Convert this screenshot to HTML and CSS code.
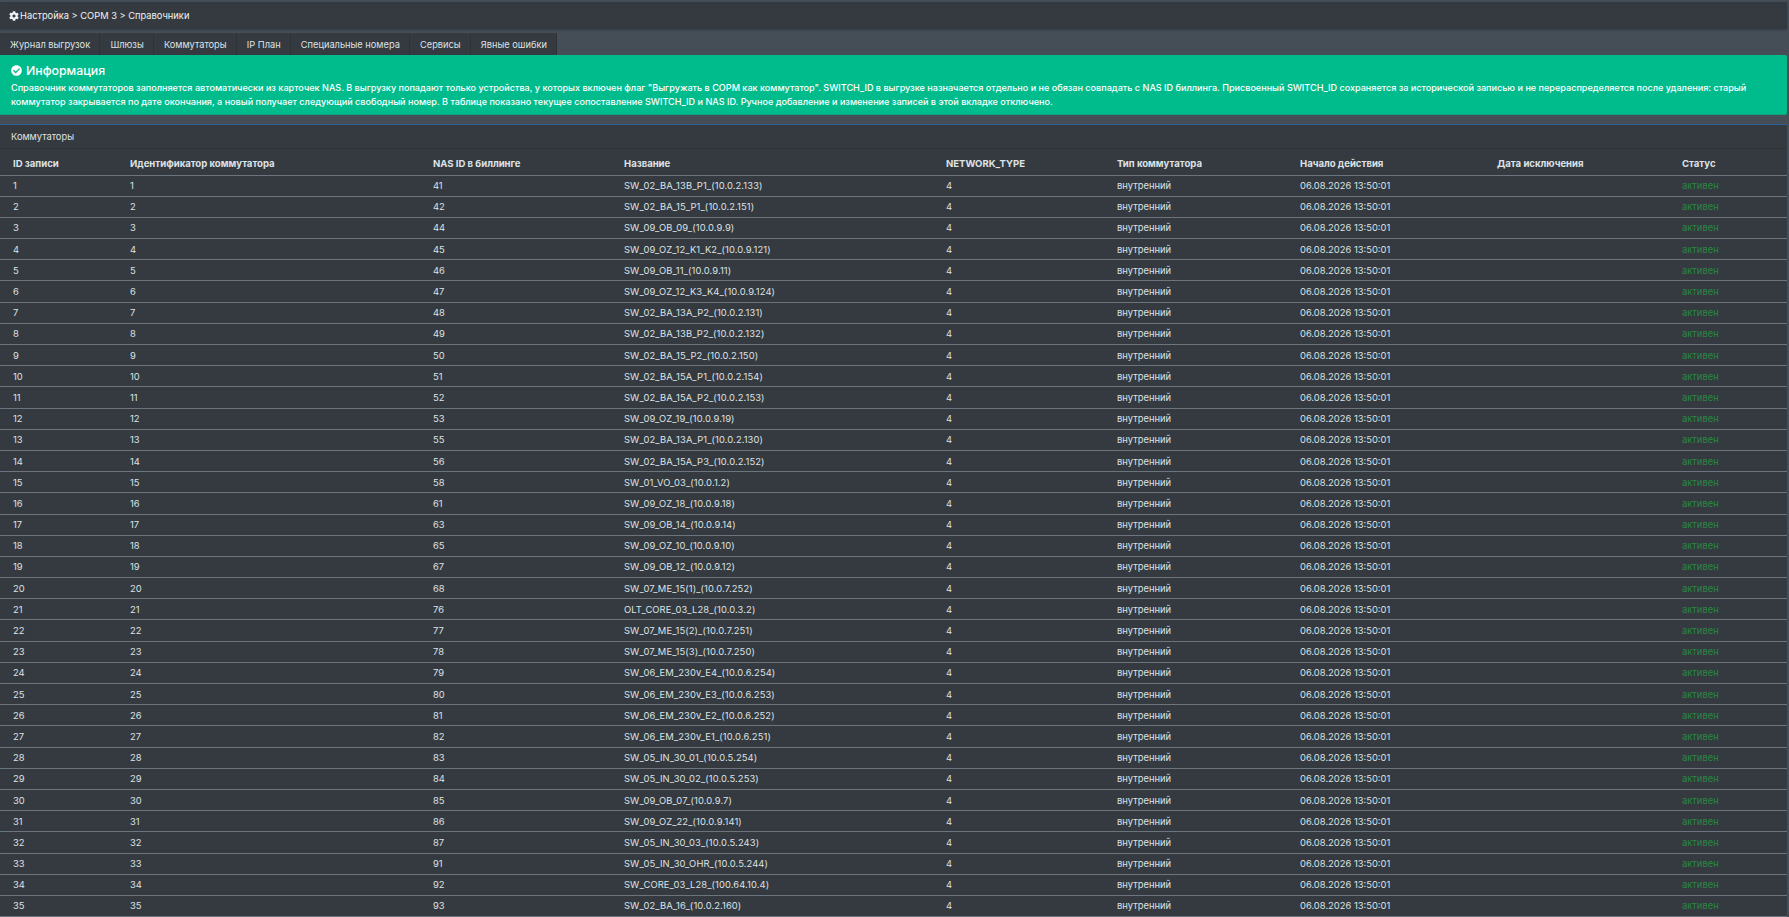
FILE: index.html
```html
<!DOCTYPE html>
<html>
<head>
  <title>Справочники</title>
  <meta name="viewport" content="width=device-width, initial-scale=1">
  <link rel="stylesheet" href="styles.css">
</head>
<body>
  <div class="crumbs">
    <svg class="ico-cog" viewBox="0 0 512 512"><path d="M487.4 315.7l-42.6-24.6c4.3-23.2 4.3-47 0-70.2l42.6-24.6c4.9-2.8 7.1-8.6 5.5-14-11.1-35.6-30-67.8-54.7-94.6-3.8-4.1-10-5.1-14.8-2.3L380.8 110c-17.9-15.4-38.5-27.3-60.8-35.1V25.8c0-5.6-3.9-10.5-9.4-11.7-36.7-8.2-74.3-7.8-109.2 0-5.5 1.2-9.4 6.1-9.4 11.7V75c-22.2 7.9-42.8 19.8-60.8 35.1L88.7 85.5c-4.9-2.8-11-1.9-14.8 2.3-24.7 26.7-43.6 58.9-54.7 94.6-1.7 5.4.6 11.2 5.5 14L67.3 221c-4.3 23.2-4.3 47 0 70.2l-42.6 24.6c-4.9 2.8-7.1 8.6-5.5 14 11.1 35.6 30 67.8 54.7 94.6 3.8 4.1 10 5.1 14.8 2.3l42.6-24.6c17.9 15.4 38.5 27.3 60.8 35.1v49.2c0 5.6 3.9 10.5 9.4 11.7 36.7 8.2 74.3 7.8 109.2 0 5.5-1.2 9.4-6.1 9.4-11.7v-49.2c22.2-7.9 42.8-19.8 60.8-35.1l42.6 24.6c4.9 2.8 11 1.9 14.8-2.3 24.7-26.7 43.6-58.9 54.7-94.6 1.5-5.5-.7-11.3-5.6-14.1zM256 336c-44.1 0-80-35.9-80-80s35.9-80 80-80 80 35.9 80 80-35.9 80-80 80z"/></svg>
    <span>Настройка &gt; СОРМ 3 &gt; Справочники</span>
  </div>

  <ul class="tabs">
    <li>Журнал выгрузок</li>
    <li>Шлюзы</li>
    <li>Коммутаторы</li>
    <li>IP План</li>
    <li>Специальные номера</li>
    <li>Сервисы</li>
    <li>Явные ошибки</li>
  </ul>

  <div class="alert">
    <h5>
      <svg class="ico-check" viewBox="0 0 512 512"><path d="M504 256c0 136.967-111.033 248-248 248S8 392.967 8 256 119.033 8 256 8s248 111.033 248 248zM227.314 387.314l184-184c6.248-6.248 6.248-16.379 0-22.627l-22.627-22.627c-6.248-6.249-16.379-6.249-22.628 0L216 308.118l-70.059-70.059c-6.248-6.248-16.379-6.248-22.628 0l-22.627 22.627c-6.248 6.248-6.248 16.379 0 22.627l104 104c6.249 6.25 16.379 6.25 22.628.001z"/></svg>
      Информация
    </h5>
    <p>Справочник коммутаторов заполняется автоматически из карточек NAS. В выгрузку попадают только устройства, у которых включен флаг "Выгружать в СОРМ как коммутатор". SWITCH_ID в выгрузке назначается отдельно и не обязан совпадать с NAS ID биллинга. Присвоенный SWITCH_ID сохраняется за исторической записью и не перераспределяется после удаления: старый коммутатор закрывается по дате окончания, а новый получает следующий свободный номер. В таблице показано текущее сопоставление SWITCH_ID и NAS ID. Ручное добавление и изменение записей в этой вкладке отключено.</p>
  </div>

  <div class="card">
    <div class="card-header">Коммутаторы</div>
    <table>
      <colgroup>
        <col class="c-id"><col class="c-switch"><col class="c-nas"><col class="c-name"><col class="c-net"><col class="c-type"><col class="c-start"><col class="c-end"><col class="c-status">
      </colgroup>
      <thead>
        <tr><th>ID записи</th><th>Идентификатор коммутатора</th><th>NAS ID в биллинге</th><th>Название</th><th>NETWORK_TYPE</th><th>Тип коммутатора</th><th>Начало действия</th><th>Дата исключения</th><th>Статус</th></tr>
      </thead>
      <tbody>
        <tr><td>1</td><td>1</td><td>41</td><td>SW_02_BA_13B_P1_(10.0.2.133)</td><td>4</td><td>внутренний</td><td>06.08.2026 13:50:01</td><td></td><td class="active">активен</td></tr>
        <tr><td>2</td><td>2</td><td>42</td><td>SW_02_BA_15_P1_(10.0.2.151)</td><td>4</td><td>внутренний</td><td>06.08.2026 13:50:01</td><td></td><td class="active">активен</td></tr>
        <tr><td>3</td><td>3</td><td>44</td><td>SW_09_OB_09_(10.0.9.9)</td><td>4</td><td>внутренний</td><td>06.08.2026 13:50:01</td><td></td><td class="active">активен</td></tr>
        <tr><td>4</td><td>4</td><td>45</td><td>SW_09_OZ_12_K1_K2_(10.0.9.121)</td><td>4</td><td>внутренний</td><td>06.08.2026 13:50:01</td><td></td><td class="active">активен</td></tr>
        <tr><td>5</td><td>5</td><td>46</td><td>SW_09_OB_11_(10.0.9.11)</td><td>4</td><td>внутренний</td><td>06.08.2026 13:50:01</td><td></td><td class="active">активен</td></tr>
        <tr><td>6</td><td>6</td><td>47</td><td>SW_09_OZ_12_K3_K4_(10.0.9.124)</td><td>4</td><td>внутренний</td><td>06.08.2026 13:50:01</td><td></td><td class="active">активен</td></tr>
        <tr><td>7</td><td>7</td><td>48</td><td>SW_02_BA_13A_P2_(10.0.2.131)</td><td>4</td><td>внутренний</td><td>06.08.2026 13:50:01</td><td></td><td class="active">активен</td></tr>
        <tr><td>8</td><td>8</td><td>49</td><td>SW_02_BA_13B_P2_(10.0.2.132)</td><td>4</td><td>внутренний</td><td>06.08.2026 13:50:01</td><td></td><td class="active">активен</td></tr>
        <tr><td>9</td><td>9</td><td>50</td><td>SW_02_BA_15_P2_(10.0.2.150)</td><td>4</td><td>внутренний</td><td>06.08.2026 13:50:01</td><td></td><td class="active">активен</td></tr>
        <tr><td>10</td><td>10</td><td>51</td><td>SW_02_BA_15A_P1_(10.0.2.154)</td><td>4</td><td>внутренний</td><td>06.08.2026 13:50:01</td><td></td><td class="active">активен</td></tr>
        <tr><td>11</td><td>11</td><td>52</td><td>SW_02_BA_15A_P2_(10.0.2.153)</td><td>4</td><td>внутренний</td><td>06.08.2026 13:50:01</td><td></td><td class="active">активен</td></tr>
        <tr><td>12</td><td>12</td><td>53</td><td>SW_09_OZ_19_(10.0.9.19)</td><td>4</td><td>внутренний</td><td>06.08.2026 13:50:01</td><td></td><td class="active">активен</td></tr>
        <tr><td>13</td><td>13</td><td>55</td><td>SW_02_BA_13A_P1_(10.0.2.130)</td><td>4</td><td>внутренний</td><td>06.08.2026 13:50:01</td><td></td><td class="active">активен</td></tr>
        <tr><td>14</td><td>14</td><td>56</td><td>SW_02_BA_15A_P3_(10.0.2.152)</td><td>4</td><td>внутренний</td><td>06.08.2026 13:50:01</td><td></td><td class="active">активен</td></tr>
        <tr><td>15</td><td>15</td><td>58</td><td>SW_01_VO_03_(10.0.1.2)</td><td>4</td><td>внутренний</td><td>06.08.2026 13:50:01</td><td></td><td class="active">активен</td></tr>
        <tr><td>16</td><td>16</td><td>61</td><td>SW_09_OZ_18_(10.0.9.18)</td><td>4</td><td>внутренний</td><td>06.08.2026 13:50:01</td><td></td><td class="active">активен</td></tr>
        <tr><td>17</td><td>17</td><td>63</td><td>SW_09_OB_14_(10.0.9.14)</td><td>4</td><td>внутренний</td><td>06.08.2026 13:50:01</td><td></td><td class="active">активен</td></tr>
        <tr><td>18</td><td>18</td><td>65</td><td>SW_09_OZ_10_(10.0.9.10)</td><td>4</td><td>внутренний</td><td>06.08.2026 13:50:01</td><td></td><td class="active">активен</td></tr>
        <tr><td>19</td><td>19</td><td>67</td><td>SW_09_OB_12_(10.0.9.12)</td><td>4</td><td>внутренний</td><td>06.08.2026 13:50:01</td><td></td><td class="active">активен</td></tr>
        <tr><td>20</td><td>20</td><td>68</td><td>SW_07_ME_15(1)_(10.0.7.252)</td><td>4</td><td>внутренний</td><td>06.08.2026 13:50:01</td><td></td><td class="active">активен</td></tr>
        <tr><td>21</td><td>21</td><td>76</td><td>OLT_CORE_03_L28_(10.0.3.2)</td><td>4</td><td>внутренний</td><td>06.08.2026 13:50:01</td><td></td><td class="active">активен</td></tr>
        <tr><td>22</td><td>22</td><td>77</td><td>SW_07_ME_15(2)_(10.0.7.251)</td><td>4</td><td>внутренний</td><td>06.08.2026 13:50:01</td><td></td><td class="active">активен</td></tr>
        <tr><td>23</td><td>23</td><td>78</td><td>SW_07_ME_15(3)_(10.0.7.250)</td><td>4</td><td>внутренний</td><td>06.08.2026 13:50:01</td><td></td><td class="active">активен</td></tr>
        <tr><td>24</td><td>24</td><td>79</td><td>SW_06_EM_230v_E4_(10.0.6.254)</td><td>4</td><td>внутренний</td><td>06.08.2026 13:50:01</td><td></td><td class="active">активен</td></tr>
        <tr><td>25</td><td>25</td><td>80</td><td>SW_06_EM_230v_E3_(10.0.6.253)</td><td>4</td><td>внутренний</td><td>06.08.2026 13:50:01</td><td></td><td class="active">активен</td></tr>
        <tr><td>26</td><td>26</td><td>81</td><td>SW_06_EM_230v_E2_(10.0.6.252)</td><td>4</td><td>внутренний</td><td>06.08.2026 13:50:01</td><td></td><td class="active">активен</td></tr>
        <tr><td>27</td><td>27</td><td>82</td><td>SW_06_EM_230v_E1_(10.0.6.251)</td><td>4</td><td>внутренний</td><td>06.08.2026 13:50:01</td><td></td><td class="active">активен</td></tr>
        <tr><td>28</td><td>28</td><td>83</td><td>SW_05_IN_30_01_(10.0.5.254)</td><td>4</td><td>внутренний</td><td>06.08.2026 13:50:01</td><td></td><td class="active">активен</td></tr>
        <tr><td>29</td><td>29</td><td>84</td><td>SW_05_IN_30_02_(10.0.5.253)</td><td>4</td><td>внутренний</td><td>06.08.2026 13:50:01</td><td></td><td class="active">активен</td></tr>
        <tr><td>30</td><td>30</td><td>85</td><td>SW_09_OB_07_(10.0.9.7)</td><td>4</td><td>внутренний</td><td>06.08.2026 13:50:01</td><td></td><td class="active">активен</td></tr>
        <tr><td>31</td><td>31</td><td>86</td><td>SW_09_OZ_22_(10.0.9.141)</td><td>4</td><td>внутренний</td><td>06.08.2026 13:50:01</td><td></td><td class="active">активен</td></tr>
        <tr><td>32</td><td>32</td><td>87</td><td>SW_05_IN_30_03_(10.0.5.243)</td><td>4</td><td>внутренний</td><td>06.08.2026 13:50:01</td><td></td><td class="active">активен</td></tr>
        <tr><td>33</td><td>33</td><td>91</td><td>SW_05_IN_30_OHR_(10.0.5.244)</td><td>4</td><td>внутренний</td><td>06.08.2026 13:50:01</td><td></td><td class="active">активен</td></tr>
        <tr><td>34</td><td>34</td><td>92</td><td>SW_CORE_03_L28_(100.64.10.4)</td><td>4</td><td>внутренний</td><td>06.08.2026 13:50:01</td><td></td><td class="active">активен</td></tr>
        <tr><td>35</td><td>35</td><td>93</td><td>SW_02_BA_16_(10.0.2.160)</td><td>4</td><td>внутренний</td><td>06.08.2026 13:50:01</td><td></td><td class="active">активен</td></tr>
      </tbody>
    </table>
  </div>
</body>
</html>
```

FILE: styles.css
```css
* {padding: 0; margin: 0; box-sizing: border-box;}

html, body {height: 917px; overflow: hidden;}

body {
    padding: 2px 2px 0 0;
    background-color: #454d57;
    color: #dee2e6;
    font-family: Inter, "Noto Sans", sans-serif;
    font-size: 9.3px;
}

.crumbs {
    height: 27px;
    display: flex;
    align-items: center;
    gap: 1px;
    padding-left: 9px;
    background-color: #343a40;
    box-shadow: 0 1px 2px rgba(0, 0, 0, .25);
    color: #f0f2f4;
}

.ico-cog {width: 10px; height: 10px; fill: #f0f2f4;}

.tabs {
    display: flex;
    margin-top: 4px;
    height: 22px;
    list-style: none;
}

.tabs li {
    display: flex;
    align-items: center;
    padding: 0 9.2px 0 10px;
    background-color: #343a40;
    border-right: 1px solid #2e3338;
    font-size: 9.25px;
}

.alert {
    height: 60px;
    padding: 5px 11px;
    background-color: #00bc8c;
    border-bottom: 1px solid #0aa37c;
    border-radius: 0 2px 2px 0;
    color: #fff;
}

.alert h5 {
    display: flex;
    align-items: center;
    gap: 4px;
    height: 20px;
    font-size: 12.3px;
    font-weight: 500;
}

.ico-check {width: 11px; height: 11px; fill: #fff;}

.alert p {padding-top: 1px; line-height: 13.5px; font-weight: 500; font-size: 9.08px;}

.card {
    margin-top: 9px;
    background-color: #343a40;
    border-top: 1px solid #2f5f94;
}

.card-header {
    height: 24px;
    display: flex;
    align-items: center;
    padding-left: 11px;
    border-bottom: 1px solid #2e3338;
}

table {width: 100%; table-layout: fixed; border-collapse: collapse;}

.c-id {width: 117px;}
.c-switch {width: 303px;}
.c-nas {width: 191px;}
.c-name {width: 322px;}
.c-net {width: 171px;}
.c-type {width: 183px;}
.c-start {width: 197px;}
.c-end {width: 185px;}

th, td {
    padding: 0 13px;
    text-align: left;
    border-bottom: 1px solid #6c757d;
    white-space: nowrap;
}

th {height: 26px; padding-top: 3px; font-size: 9.55px; font-weight: 700;}

td {height: 21.2px; font-size: 9.4px;}

td:nth-child(4) {letter-spacing: .1px;}

.active {color: #28893f;}
```
